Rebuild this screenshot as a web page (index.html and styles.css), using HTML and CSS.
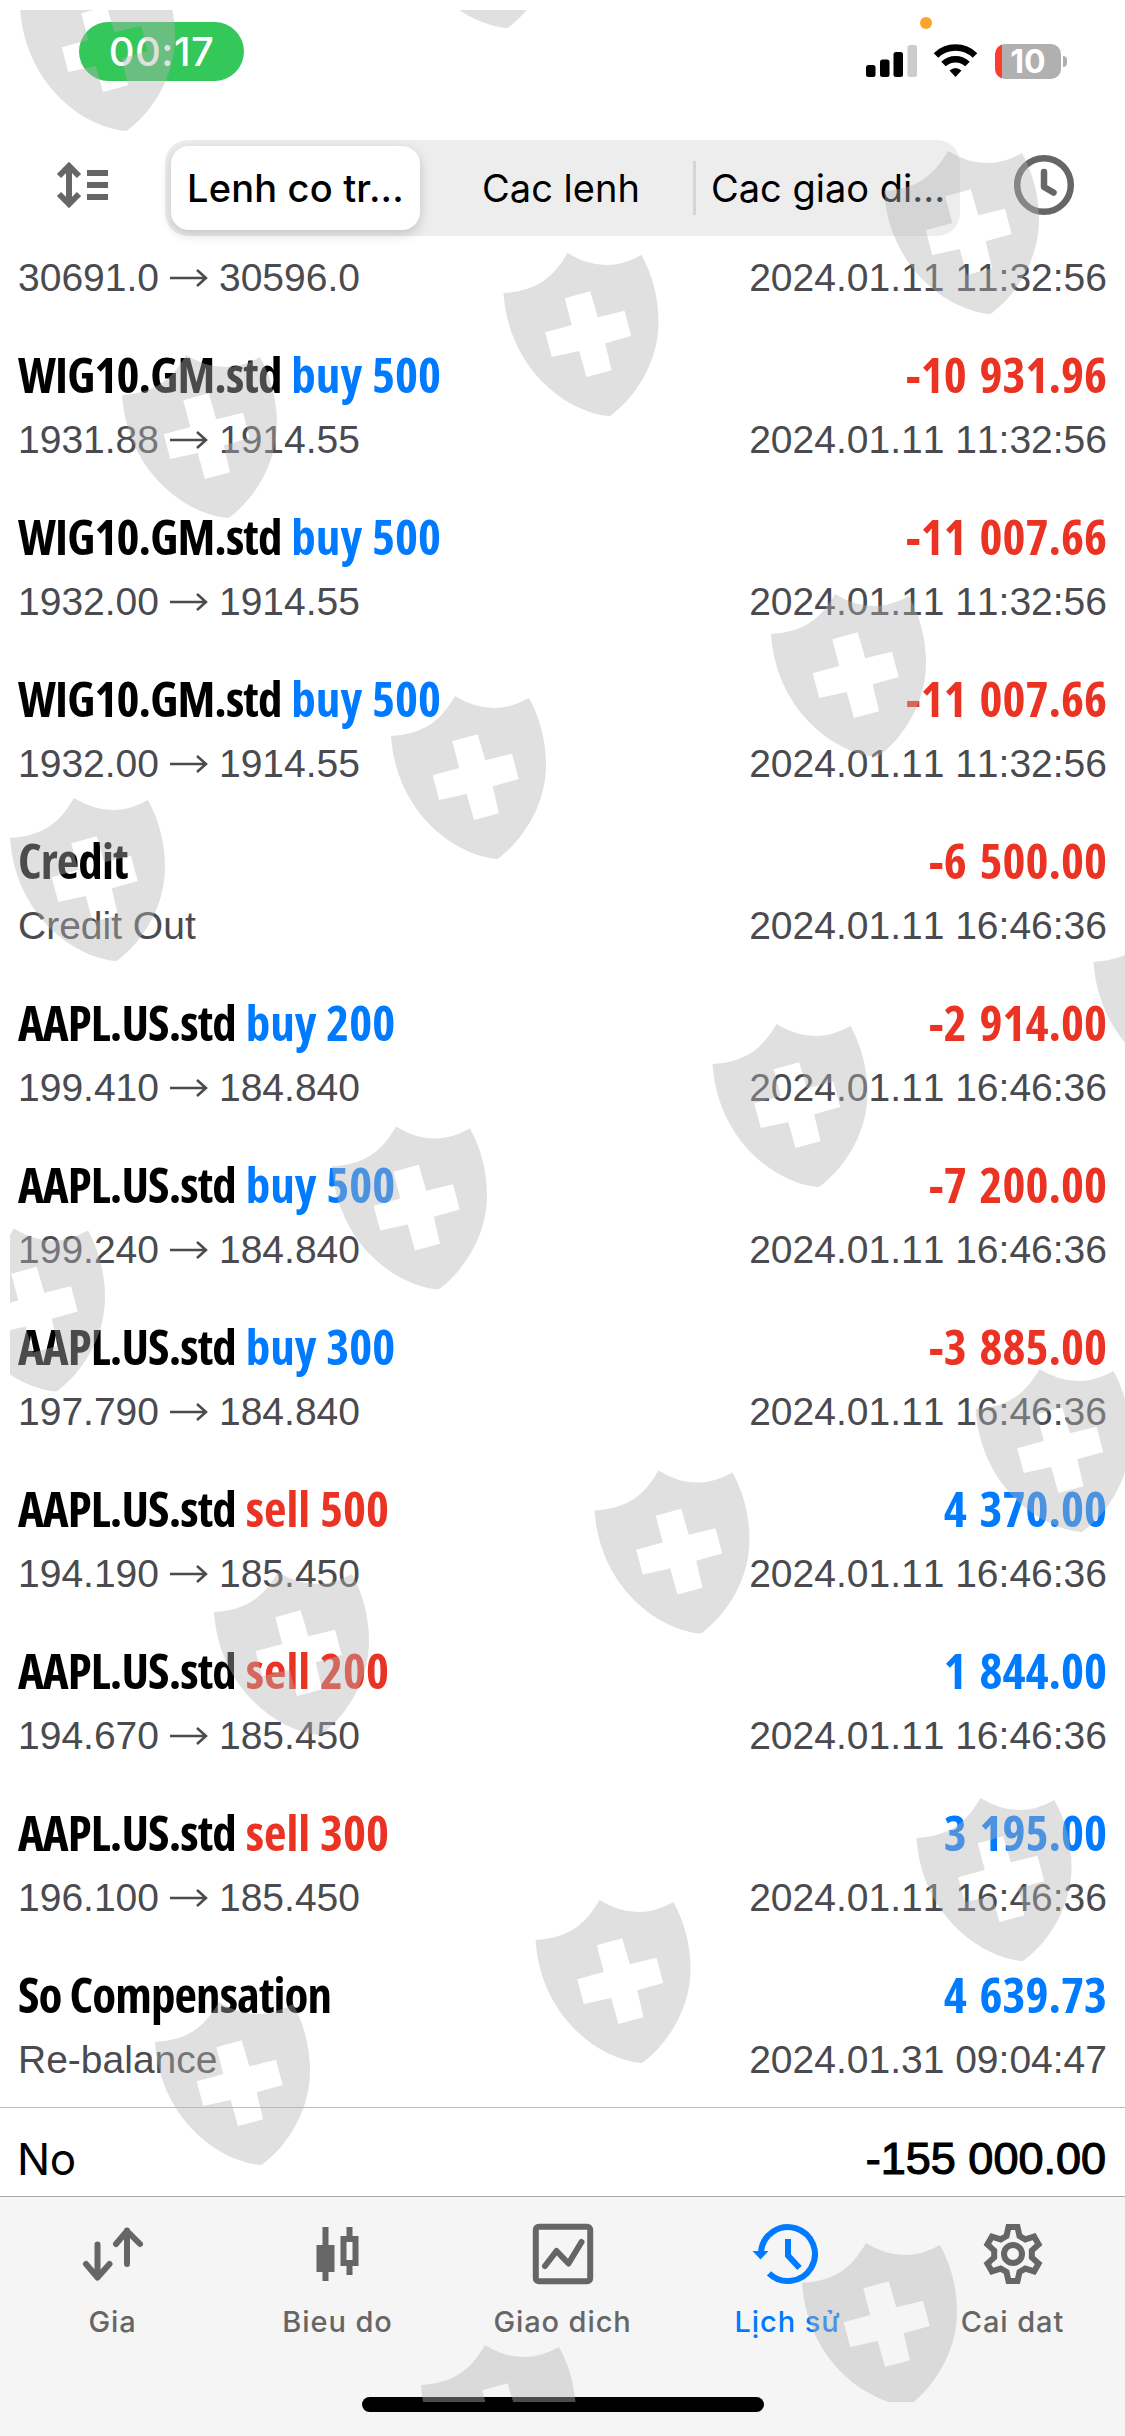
FILE: index.html
```html
<!DOCTYPE html>
<html lang="vi">
<head>
    <meta charset="UTF-8">
    <meta name="viewport" content="width=device-width, initial-scale=1.0">
    <title>Lịch sử</title>
    <link rel="stylesheet" href="styles.css">
</head>
<body>
    <div class="app">
        <!-- Status bar -->
        <div class="status-bar">
            <div class="call-time"><span>00:17</span></div>
            <span class="mic-dot"></span>
            <div class="status-icons">
                <svg class="signal" viewBox="0 0 51 32">
                    <rect x="0" y="20" width="9.5" height="12" rx="2.5"/>
                    <rect x="14" y="14.5" width="9.5" height="17.5" rx="2.5"/>
                    <rect x="27.5" y="7" width="9.5" height="25" rx="2.5"/>
                    <rect x="41.5" y="0" width="9.5" height="32" rx="2.5" fill="#ccc"/>
                </svg>
                <svg class="wifi" viewBox="0 0 43 33">
                    <g fill="none" stroke="#000" stroke-width="6.5">
                        <path d="M2 11.5A28 28 0 0 1 41 11.5"/>
                        <path d="M9.5 20A17.5 17.5 0 0 1 33.5 20"/>
                    </g>
                    <path d="M21.5 33L15.5 26.5Q21.5 21.5 27.5 26.5Z"/>
                </svg>
                <div class="battery"><span>10</span></div>
            </div>
        </div>

        <!-- Top navigation -->
        <div class="nav">
            <svg class="icon-sort" viewBox="0 0 52 46">
                <g fill="none" stroke="#666" stroke-width="6">
                    <path d="M12 4V42M2 14L12 4L22 14M2 32L12 42L22 32"/>
                    <path d="M30 11H51M30 23H51M30 35H51"/>
                </g>
            </svg>
            <div class="segments">
                <div class="segment active"><span>Lenh co tr...</span></div>
                <div class="segment"><span>Cac lenh</span></div>
                <div class="segment divided"><span>Cac giao di...</span></div>
            </div>
            <svg class="icon-clock" viewBox="0 0 60 60">
                <g fill="none" stroke="#666" stroke-width="6.5" stroke-linecap="round" stroke-linejoin="round">
                    <circle cx="30" cy="30" r="26.8"/>
                    <path d="M30 17V32L39.5 37.5"/>
                </g>
            </svg>
        </div>

        <!-- Deals, filled in by script.js -->
        <div class="deals" id="deals"></div>

        <div class="total">
            <span class="total-label">No</span>
            <span class="total-value">-155 000.00</span>
        </div>

        <!-- Tab bar -->
        <div class="tabs">
            <div class="tab">
                <svg viewBox="0 0 60 60"><path class="line" stroke-linecap="round" stroke-linejoin="round" d="M14.5 20.5V53M3 40L14.5 53.5L26.5 40M44 40V6.5M33 20L44 7L57 20"/></svg>
                <span>Gia</span>
            </div>
            <div class="tab">
                <svg viewBox="0 0 60 60">
                    <path fill="#666" d="M14.5 3h6v18h6v27h-6v9h-6v-9h-6V21h6z"/>
                    <path fill="#666" fill-rule="evenodd" d="M38.5 3h6v9h6v30h-6v9h-6v-9h-6V12h6zM38.5 18v18h6V18z"/>
                </svg>
                <span>Bieu do</span>
            </div>
            <div class="tab">
                <svg viewBox="0 0 60 60">
                    <rect class="line" x="2.8" y="2.8" width="54.4" height="54.4" rx="3"/>
                    <path class="line" stroke-linecap="round" stroke-linejoin="round" d="M12 42L23.5 27L35.5 39.5L48.5 18"/>
                </svg>
                <span>Giao dich</span>
            </div>
            <div class="tab selected">
                <svg viewBox="0 0 60 60">
                    <path class="line" d="M3 28A27 27 0 1 1 11 49.3M30 15V31.5L41.5 44"/>
                    <path fill="#007aff" d="M-5.5 27H10.5L2.5 35.5Z"/>
                </svg>
                <span>Lịch sử</span>
            </div>
            <div class="tab">
                <svg viewBox="-30 -30 60 60">
                    <path class="line" d="M-6.5 -18L-4.5 -27H4.5L6.5 -18L12.3 -14.6L21.1 -17.4L25.6 -9.6L18.8 -3.4V3.4L25.6 9.6L21.1 17.4L12.3 14.6L6.5 18L4.5 27H-4.5L-6.5 18L-12.3 14.6L-21.1 17.4L-25.6 9.6L-18.8 3.4V-3.4L-25.6 -9.6L-21.1 -17.4L-12.3 -14.6Z"/>
                    <circle class="line" r="9"/>
                </svg>
                <span>Cai dat</span>
            </div>
        </div>
        <div class="home-bar"></div>

        <!-- Shield watermark over the whole screen -->
        <svg class="watermark" id="watermark" viewBox="10 10 1115 2392">
            <defs>
                <path id="shield" fill-rule="evenodd" d="M64 1Q101 24 138 3C149 23 155 46 155 70C155 108 134 143 108 163Q107 164 105 164C60 159 5 115 0 41C32 39 49 27 64 1ZM61.3 46.3L86.7 39.3L94.3 65.3L121 58.7L127.7 84L101.7 91.3L108 118.3L83 125L75.7 99L48.3 105L41.7 80.3L68.3 73Z"/>
            </defs>
        </svg>
    </div>
    <script src="script.js"></script>
</body>
</html>
```
FILE: styles.css
```css
/* General Styles */
* {
    box-sizing: border-box;
}
body {
    margin: 0;
    font-family: Inter, "Liberation Sans", sans-serif;
    background: #fff;
    color: #000;
}
svg {
    display: block;
    overflow: visible;
}
.app {
    position: relative;
    width: 1125px;
    height: 2436px;
    overflow: hidden;
    display: flex;
    flex-direction: column;
    background: #fff;
}

/* Status Bar */
.status-bar {
    position: relative;
    height: 140px;
    padding: 22px 58px 0 79px;
    display: flex;
    justify-content: space-between;
    align-items: flex-start;
}
.call-time {
    width: 165px;
    height: 59px;
    border-radius: 30px;
    background: #34c759;
    color: #fff;
    font-size: 40px;
    font-weight: 500;
    letter-spacing: 0.5px;
    line-height: 60px;
    text-align: center;
}
.mic-dot {
    position: absolute;
    left: 920px;
    top: 17px;
    width: 12px;
    height: 12px;
    border-radius: 50%;
    background: #ffa42b;
}
.status-icons {
    display: flex;
    padding-top: 22px;
}
.signal {
    width: 51px;
    height: 32px;
    margin: 1px 17px 0 0;
}
.wifi {
    width: 43px;
    height: 33px;
    margin-right: 18px;
}
.battery {
    position: relative;
    width: 66px;
    height: 35px;
    margin-right: 6px;
    border-radius: 10px;
    background: linear-gradient(to right, #ff3b30 7px, #b0b0b0 7px);
    color: #fff;
    font-size: 32px;
    font-weight: 700;
    line-height: 35px;
    text-align: center;
}
.battery::after {
    content: "";
    position: absolute;
    right: -6px;
    top: 12px;
    width: 4px;
    height: 11px;
    border-radius: 0 4px 4px 0;
    background: #b0b0b0;
}

/* Navigation */
.nav {
    height: 96px;
    padding: 0 51px 0 57px;
    display: flex;
    align-items: center;
    justify-content: space-between;
}
.icon-sort {
    width: 52px;
    height: 46px;
    margin-bottom: 6px;
}
.icon-clock {
    width: 60px;
    height: 60px;
    margin-bottom: 6px;
}
.segments {
    width: 795px;
    height: 96px;
    margin-right: -2px;
    border-radius: 23px;
    background: #ededed;
    display: grid;
    grid-template-columns: 264px 264px 267px;
}
.segment {
    height: 96px;
    display: flex;
    align-items: center;
    justify-content: center;
    font-size: 38px;
    line-height: 96px;
    white-space: nowrap;
}
.segment.active {
    width: 249px;
    height: 84px;
    margin: 6px 0 0 6px;
    border-radius: 18px;
    background: #fff;
    box-shadow: 0 4px 12px rgba(0, 0, 0, 0.18);
    font-weight: 500;
    letter-spacing: 0.2px;
    line-height: 84px;
}
.segment.divided {
    justify-content: flex-start;
}
.segment.divided::before {
    content: "";
    width: 3px;
    height: 54px;
    margin-right: 15px;
    background: #d4d4dc;
}

/* Deals */
.deals {
    height: 1872px;
    display: flex;
    flex-direction: column;
    justify-content: flex-end;
    overflow: hidden;
    border-bottom: 1px solid #bbb;
}
.deal {
    flex: none;
    height: 162px;
    padding: 17px 18px 0;
}
.deal.cut {
    height: 90px;
    padding-top: 13px;
}
.deal-line {
    display: flex;
    justify-content: space-between;
    align-items: center;
}
.deal-title {
    height: 64px;
    font-family: "Open Sans", sans-serif;
    font-size: 49px;
    font-weight: 700;
    font-stretch: 75%;
    line-height: 64px;
    white-space: pre;
}
.symbol {
    letter-spacing: -0.9px;
}
.side {
    word-spacing: 1px;
}
.profit {
    word-spacing: 4px;
}
.deal-info {
    height: 68px;
    font-family: "Liberation Sans", sans-serif;
    font-size: 39px;
    font-kerning: none;
    line-height: 68px;
    color: #4a4a4f;
}
.cut .deal-info {
    height: 60px;
    line-height: 60px;
}
.prices {
    display: flex;
    align-items: center;
    gap: 11px;
}
.prices svg {
    width: 38px;
    height: 18px;
}
.blue {
    color: #007aff;
}
.red {
    color: #eb3323;
}

/* Total */
.total {
    height: 89px;
    padding: 13px 19px 0 17px;
    display: flex;
    justify-content: space-between;
    align-items: center;
    border-bottom: 1px solid #a8a8a8;
}
.total-label {
    font-size: 44px;
    letter-spacing: -0.5px;
}
.total-value {
    font-family: "Liberation Sans", sans-serif;
    font-size: 45px;
    font-kerning: none;
    -webkit-text-stroke: 1.2px #000;
}

/* Tab Bar */
.tabs {
    flex: 1;
    padding-top: 27px;
    background: #f5f5f5;
    display: grid;
    grid-template-columns: repeat(5, 225px);
}
.tab {
    display: flex;
    flex-direction: column;
    align-items: center;
    color: #666;
    font-size: 29px;
    font-weight: 500;
    letter-spacing: 0.9px;
}
.tab svg {
    width: 60px;
    height: 60px;
}
.tab span {
    margin-top: 20px;
    line-height: 36px;
}
.tab.selected {
    color: #007aff;
}
.line {
    fill: none;
    stroke: currentColor;
    stroke-width: 6;
}
.home-bar {
    position: absolute;
    left: 362px;
    top: 2397px;
    width: 402px;
    height: 15px;
    border-radius: 8px;
    background: #000;
}

/* Watermark */
.watermark {
    position: absolute;
    left: 10px;
    top: 10px;
    width: 1115px;
    height: 2392px;
    overflow: hidden;
    fill: rgba(180, 180, 180, 0.416);
    pointer-events: none;
}
```
FILE: script.js
```javascript
const deals = [
    { open: "30691.0", close: "30596.0", time: "2024.01.11 11:32:56" },
    { symbol: "WIG10.GM.std", side: "buy", volume: 500, open: "1931.88", close: "1914.55", profit: "-10 931.96", time: "2024.01.11 11:32:56" },
    { symbol: "WIG10.GM.std", side: "buy", volume: 500, open: "1932.00", close: "1914.55", profit: "-11 007.66", time: "2024.01.11 11:32:56" },
    { symbol: "WIG10.GM.std", side: "buy", volume: 500, open: "1932.00", close: "1914.55", profit: "-11 007.66", time: "2024.01.11 11:32:56" },
    { symbol: "Credit", note: "Credit Out", profit: "-6 500.00", time: "2024.01.11 16:46:36" },
    { symbol: "AAPL.US.std", side: "buy", volume: 200, open: "199.410", close: "184.840", profit: "-2 914.00", time: "2024.01.11 16:46:36" },
    { symbol: "AAPL.US.std", side: "buy", volume: 500, open: "199.240", close: "184.840", profit: "-7 200.00", time: "2024.01.11 16:46:36" },
    { symbol: "AAPL.US.std", side: "buy", volume: 300, open: "197.790", close: "184.840", profit: "-3 885.00", time: "2024.01.11 16:46:36" },
    { symbol: "AAPL.US.std", side: "sell", volume: 500, open: "194.190", close: "185.450", profit: "4 370.00", time: "2024.01.11 16:46:36" },
    { symbol: "AAPL.US.std", side: "sell", volume: 200, open: "194.670", close: "185.450", profit: "1 844.00", time: "2024.01.11 16:46:36" },
    { symbol: "AAPL.US.std", side: "sell", volume: 300, open: "196.100", close: "185.450", profit: "3 195.00", time: "2024.01.11 16:46:36" },
    { symbol: "So Compensation", note: "Re-balance", profit: "4 639.73", time: "2024.01.31 09:04:47" }
];

const arrow = '<svg viewBox="0 0 38 18"><path fill="none" stroke="#4a4a4f" stroke-width="2.5" d="M0 9H36M27 1L36 9L27 17"/></svg>';

function renderDeal(deal) {
    const info = deal.note || `${deal.open}${arrow}${deal.close}`;
    let title = "";
    if (deal.symbol) {
        const side = deal.side ? `<span class="side ${deal.side === "buy" ? "blue" : "red"}"> ${deal.side} ${deal.volume}</span>` : "";
        const color = deal.profit.startsWith("-") ? "red" : "blue";
        title = `<div class="deal-line deal-title"><span><span class="symbol">${deal.symbol}</span>${side}</span><span class="profit ${color}">${deal.profit}</span></div>`;
    }
    return `<div class="deal${deal.symbol ? "" : " cut"}">${title}
        <div class="deal-line deal-info"><span class="prices">${info}</span><span class="time">${deal.time}</span></div>
    </div>`;
}

document.getElementById("deals").innerHTML = deals.map(renderDeal).join("");

// Shield positions
const shields = [
    [20, -33], [401, -136], [884, 150], [503.5, 252], [122, 354],
    [771, 593], [391, 695], [10, 797], [1093.5, 921], [712.5, 1023],
    [332, 1125.5], [-50, 1227.5], [975.5, 1368], [594.5, 1469.5], [214, 1571],
    [916.5, 1797], [535.5, 1899], [155, 2001], [802, 2242], [421, 2344]
];
document.getElementById("watermark").innerHTML += shields
    .map(([x, y]) => `<use href="#shield" x="${x}" y="${y}"/>`)
    .join("");
```
